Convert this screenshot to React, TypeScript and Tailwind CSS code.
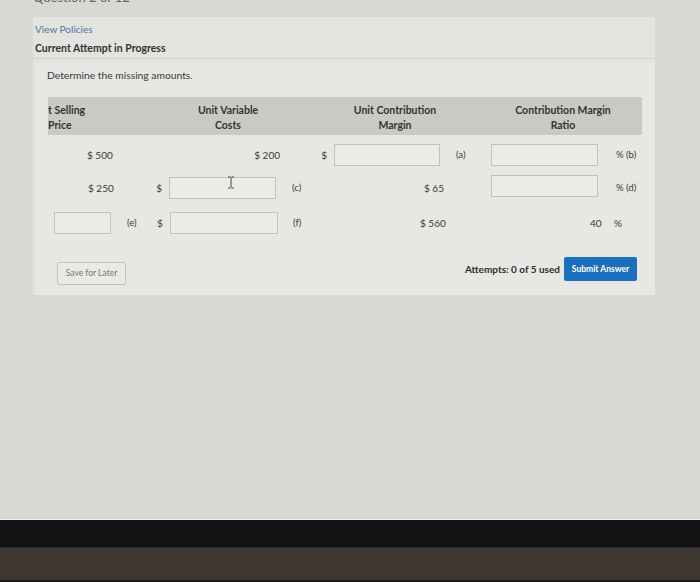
import React from 'react';

const font = { fontFamily: 'Lato, "Open Sans", sans-serif' };

function Box({ w }: { w: string }) {
  return <div className={`h-[22px] shrink-0 border border-[#c2c2bd] bg-[#ebebe7] ${w}`} />;
}

export default function App() {
  return (
    <div className="flex h-[582px] w-[700px] flex-col overflow-hidden bg-[#d9d9d4] text-[#3a3a3a]" style={font}>
      <div className="flex-1">
        {/* cut-off question title */}
        <div className="h-[17px] overflow-hidden">
          <div className="-mt-[11px] pl-[33px] text-[13px] leading-[16px] text-[#666]">Question 2 of 12</div>
        </div>

        <div className="ml-[33px] w-[622px] bg-[#e3e3df]">
          <div className="border-b border-[#d2d2cd] pb-[3px] pl-[2px] pt-[5px]">
            <div className="text-[10px] leading-[14px] text-[#4f74a8]">View Policies</div>
            <div className="mt-[5px] text-[10.5px] font-bold leading-[14px] text-[#333]">Current Attempt in Progress</div>
          </div>

          <div className="ml-[3px] mt-[4px] bg-[#e7e7e3] pb-[10px] pl-[11px] pt-[5px]">
            <div className="text-[10.3px] leading-[14px]">Determine the missing amounts.</div>

            {/* table header */}
            <div className="ml-[1px] mt-[15px] flex h-[38px] w-[594px] bg-[#cacac5] pt-[6px] text-[10.5px] font-bold leading-[15px] text-[#333]">
              <div className="w-[97px] shrink-0">
                t Selling
                <br />
                Price
              </div>
              <div className="w-[166px] shrink-0 text-center">
                Unit Variable
                <br />
                Costs
              </div>
              <div className="w-[168px] shrink-0 text-center">
                Unit Contribution
                <br />
                Margin
              </div>
              <div className="w-[163px] shrink-0 pl-[5px] text-center">
                Contribution Margin
                <br />
                Ratio
              </div>
            </div>

            <div className="ml-[1px] text-[10px] leading-[22px]">
              {/* row 1 */}
              <div className="mt-[9px] flex h-[22px] items-center">
                <div className="w-[66px] shrink-0 pl-[39px]">$ 500</div>
                <div className="w-[166px] shrink-0 text-right">$ 200</div>
                <div className="w-[54px] shrink-0 pr-[7px] text-right">$</div>
                <Box w="w-[106px]" />
                <div className="w-[51px] shrink-0 pl-[16px] text-[9.5px]">(a)</div>
                <Box w="w-[107px]" />
                <div className="pl-[18px] text-[9.5px]">% (b)</div>
              </div>

              {/* row 2 */}
              <div className="relative mt-[11px] flex h-[22px] items-center">
                <div className="w-[66px] shrink-0 pl-[40px]">$ 250</div>
                <div className="w-[55px] shrink-0 pr-[7px] text-right">$</div>
                <Box w="w-[107px]" />
                <div className="w-[148px] shrink-0 pl-[16px] text-[9.5px]">(c)</div>
                <div className="w-[67px] shrink-0">$ 65</div>
                <div className="-mt-[4px]">
                  <Box w="w-[107px]" />
                </div>
                <div className="pl-[18px] text-[9.5px]">% (d)</div>
                {/* mouse text cursor */}
                <svg className="absolute left-[179px] top-[-1px]" width="8" height="13" viewBox="0 0 8 13">
                  <path d="M1 1h2.5M4.5 1H7M4 1.5v10M1 12h2.5M4.5 12H7" stroke="#444" strokeWidth="1" fill="none" />
                </svg>
              </div>

              {/* row 3 */}
              <div className="mt-[13px] flex h-[22px] items-center">
                <div className="ml-[6px]">
                  <Box w="w-[57px]" />
                </div>
                <div className="w-[46px] shrink-0 pl-[16px] text-[9.5px]">(e)</div>
                <div className="w-[13px] shrink-0">$</div>
                <Box w="w-[108px]" />
                <div className="w-[142px] shrink-0 pl-[15px] text-[9.5px]">(f)</div>
                <div className="w-[170px] shrink-0">$ 560</div>
                <div className="w-[24px] shrink-0">40</div>
                <div>%</div>
              </div>
            </div>

            {/* actions */}
            <div className="mt-[23px] flex items-start pr-[18px]">
              <button className="ml-[10px] mt-[5px] h-[23px] w-[69px] rounded-[2px] border border-[#c4c4bf] bg-[#e9e9e5] text-[8.5px] text-[#777]">
                Save for Later
              </button>
              <div className="flex-1" />
              <div className="mr-[4px] mt-[5px] text-[10px] font-bold leading-[14px] text-[#2e2e2e]">Attempts: 0 of 5 used</div>
              <button className="h-[24px] w-[73px] rounded-[2px] bg-[#1b6fbb] text-[8.5px] font-bold text-white">
                Submit Answer
              </button>
            </div>
          </div>
        </div>
      </div>

      {/* screen bezel and laptop body */}
      <div className="h-[28px] shrink-0 border-t border-[#f2f2f0] bg-[#101214]" />
      <div className="h-[33px] shrink-0 border-t border-[#2a2a2a] bg-[#3e3631]" />
      <div className="h-[2px] shrink-0 bg-[#1c1a19]" />
    </div>
  );
}
